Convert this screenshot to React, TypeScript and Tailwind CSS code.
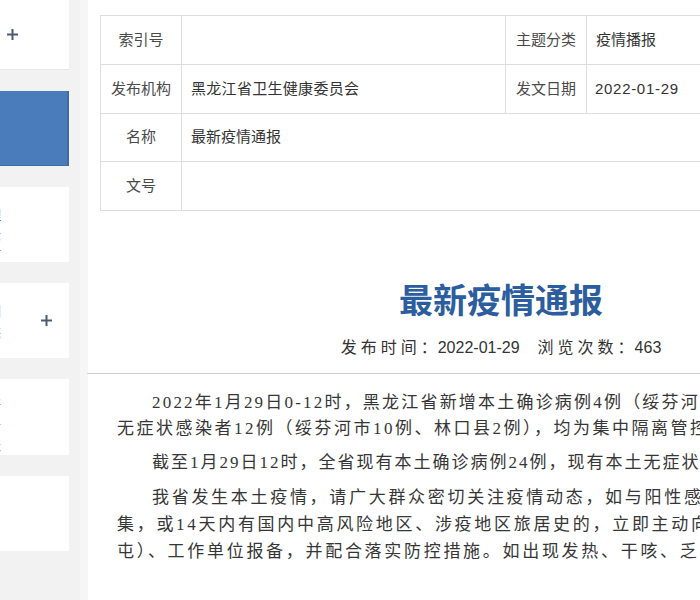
import React from "react";

function Plus() {
  return (
    <svg width="13" height="13" viewBox="0 0 13 13" className="block">
      <path d="M6.5 1v11M1 6.5h11" stroke="#4c5b72" strokeWidth="2" />
    </svg>
  );
}

export default function App() {
  return (
    <div className="w-[700px] h-[600px] overflow-hidden flex bg-white font-['Liberation_Sans','Noto_Sans_CJK_SC',sans-serif]">
      <aside className="w-[88px] shrink-0 bg-[#f2f2f2] flex flex-col gap-[21px] border-r-[8px] border-[#f6f6f6]">
        <div className="w-[69px] h-[70px] bg-white border-b border-[#e6e6e6] flex items-center pl-[6px]">
          <Plus />
        </div>
        <div className="w-[69px] h-[75px] bg-[#4a7bbb] border-r-2 border-b border-[#3f6ca8]" />
        <div className="w-[69px] h-[75px] bg-white overflow-hidden">
          <div className="-ml-[13px] pt-[18px] text-[14px] leading-[20px] text-[#333]">
            <div>理</div>
            <div>示</div>
            <div>言</div>
          </div>
        </div>
        <div className="w-[69px] h-[75px] bg-white overflow-hidden flex items-center">
          <div className="-ml-[13px] text-[14px] leading-[20px] text-[#555]">
            <div>图</div>
            <div>读</div>
          </div>
          <div className="ml-[39px]">
            <Plus />
          </div>
        </div>
        <div className="w-[69px] h-[76px] bg-white overflow-hidden">
          <div className="-ml-[13px] pt-[16px] text-[14px] leading-[20px] text-[#444]">
            <div>开</div>
            <div>告</div>
            <div>表</div>
          </div>
        </div>
        <div className="w-[69px] h-[75px] bg-white" />
      </aside>

      <main className="w-[826px] shrink-0 bg-white">
        <div className="pt-[15px] pl-[12px] pr-[10px]">
          <table className="w-[804px] border-collapse text-[15px] table-fixed">
            <colgroup>
              <col className="w-[81px]" />
              <col className="w-[324px]" />
              <col className="w-[81px]" />
              <col />
            </colgroup>
            <tbody>
              <tr className="h-[49px]">
                <td className="border border-[#dedede] text-center text-[#4a4a4a]">索引号</td>
                <td className="border border-[#dedede]"></td>
                <td className="border border-[#dedede] text-center text-[#4a4a4a]">主题分类</td>
                <td className="border border-[#dedede] pl-[9px] text-[#333]">疫情播报</td>
              </tr>
              <tr className="h-[49px]">
                <td className="border border-[#dedede] text-center text-[#4a4a4a]">发布机构</td>
                <td className="border border-[#dedede] pl-[9px] text-[#333] tracking-[0.3px]">黑龙江省卫生健康委员会</td>
                <td className="border border-[#dedede] text-center text-[#4a4a4a]">发文日期</td>
                <td className="border border-[#dedede] pl-[8px] text-[#333] tracking-[0.7px]">2022-01-29</td>
              </tr>
              <tr className="h-[48px]">
                <td className="border border-[#dedede] text-center text-[#4a4a4a]">名称</td>
                <td colSpan={3} className="border border-[#dedede] pl-[9px] text-[#333]">最新疫情通报</td>
              </tr>
              <tr className="h-[49px]">
                <td className="border border-[#dedede] text-center text-[#4a4a4a]">文号</td>
                <td colSpan={3} className="border border-[#dedede]"></td>
              </tr>
            </tbody>
          </table>
        </div>

        <h1 className="mt-[70px] text-center text-[34px] leading-[41px] font-bold text-[#2c5d9e]">最新疫情通报</h1>
        <div className="mt-[14px] flex justify-center gap-[18px] text-[16px] leading-[24px] text-[#333]">
          <span>
            <span className="tracking-[4px]">发布时间</span>
            <span className="tracking-[1px]">：</span>
            <span>2022-01-29</span>
          </span>
          <span>
            <span className="tracking-[4px]">浏览次数</span>
            <span className="tracking-[1px]">：</span>
            <span>463</span>
          </span>
        </div>

        <div className="mt-[13px] border-t border-[#d0d0d0] -ml-px" />

        <div className="pl-[29px] pt-[16px] text-[17px] text-[#363636] font-['Liberation_Serif','Noto_Sans_CJK_SC',serif] whitespace-nowrap">
          <p className="leading-[26px] mb-[8px]">
            <span className="block ml-[35px] tracking-[2.2px]">2022年1月29日0-12时，黑龙江省新增本土确诊病例4例（绥芬河市4例），新增本土</span>
            <span className="block tracking-[2.5px]">无症状感染者12例（绥芬河市10例、林口县2例），均为集中隔离管控人员。</span>
          </p>
          <p className="leading-[26px] mb-[8px]">
            <span className="block ml-[35px] tracking-[2px]">截至1月29日12时，全省现有本土确诊病例24例，现有本土无症状感染者28例。</span>
          </p>
          <p className="leading-[27px]">
            <span className="block ml-[35px] tracking-[2.7px]">我省发生本土疫情，请广大群众密切关注疫情动态，如与阳性感染者有轨迹交</span>
            <span className="block tracking-[2.7px]">集，或14天内有国内中高风险地区、涉疫地区旅居史的，立即主动向所在社区（村</span>
            <span className="block tracking-[2.7px]">屯）、工作单位报备，并配合落实防控措施。如出现发热、干咳、乏力等症状，</span>
          </p>
        </div>
      </main>
    </div>
  );
}
